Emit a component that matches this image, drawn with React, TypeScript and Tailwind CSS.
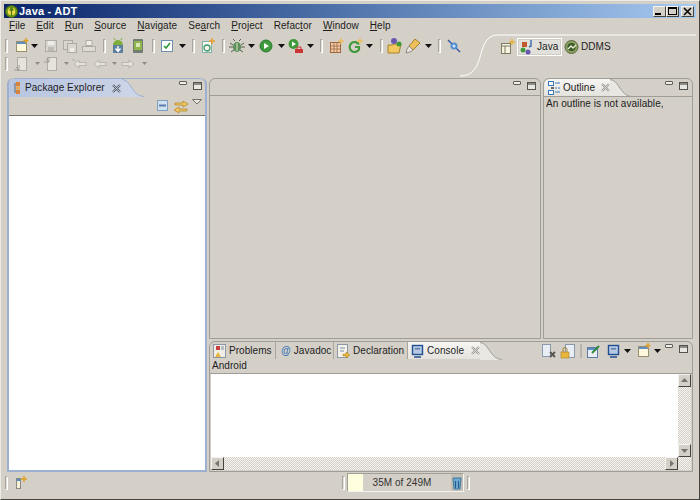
import type { ReactNode } from "react";

function SepBar() {
  return <div className="h-[14px] w-[3px] shrink-0 rounded-[1px] border border-[#a8a59c] border-r-white border-b-white bg-[#e4e1da]" />;
}

function Sep() {
  return (
    <div className="mx-[4px] shrink-0">
      <SepBar />
    </div>
  );
}

function Gap({ w }: { w: number }) {
  return <div className="shrink-0" style={{ width: w }} />;
}

function Arrow({ faded }: { faded?: boolean }) {
  return (
    <svg width="7" height="4" viewBox="0 0 7 4" className="mx-[2px] shrink-0">
      {faded ? <path d="M1 0h5L3.500 3z" fill="#8f8c85" /> : <path d="M0 0h7L3.500 4z" fill="#111" />}
    </svg>
  );
}

function Ico({ children, w = 16 }: { children: ReactNode; w?: number }) {
  return (
    <svg width={w} height="16" viewBox={`0 0 ${w} 16`} className="shrink-0">
      {children}
    </svg>
  );
}

const NewIco = () => (
  <Ico>
    <rect x="3.500" y="3.500" width="10" height="10" fill="#fff8dc" stroke="#9a8f6d" />
    <rect x="4" y="4" width="9" height="2" fill="#5f8fc4" />
    <path d="M13 0v5M10.500 2.500h5" stroke="#e0a020" strokeWidth="1.400" />
  </Ico>
);
const SaveIco = () => (
  <Ico>
    <rect x="2.500" y="2.500" width="11" height="11" fill="#d9d6cf" stroke="#aeaba3" />
    <rect x="5" y="3" width="6" height="4" fill="#efede8" />
    <rect x="5" y="9" width="6" height="4" fill="#bdbab2" />
  </Ico>
);
const SaveAllIco = () => (
  <Ico>
    <rect x="1.500" y="2.500" width="9" height="9" fill="#d9d6cf" stroke="#aeaba3" />
    <rect x="5.500" y="5.500" width="9" height="9" fill="#d9d6cf" stroke="#aeaba3" />
    <rect x="8" y="10" width="4" height="4" fill="#efede8" />
  </Ico>
);
const PrintIco = () => (
  <Ico>
    <path d="M5 2.500h6v5H5z" fill="#efede8" stroke="#aeaba3" />
    <path d="M1.500 8.500h13v5h-13z" fill="#dedbd4" stroke="#aeaba3" />
  </Ico>
);
const SdkIco = () => (
  <Ico>
    <path d="M3 7a5 5 0 0 1 10 0z" fill="#7fae3c" />
    <path d="M5 2 4 0M11 2l1-2" stroke="#7fae3c" />
    <rect x="3" y="7" width="10" height="8" fill="#5d7f9e" />
    <path d="M8 8v5M5.500 10.500 8 13.500l2.500-3" stroke="#fff" strokeWidth="1.400" fill="none" />
  </Ico>
);
const AvdIco = () => (
  <Ico>
    <rect x="3" y="1" width="10" height="14" rx="1" fill="#6f7d72" />
    <rect x="4" y="3" width="8" height="9" fill="#8fb44a" />
    <rect x="6" y="5" width="4" height="4" fill="#d9e8b8" />
  </Ico>
);
const CheckIco = () => (
  <Ico>
    <rect x="2.500" y="2.500" width="11" height="11" fill="#fff" stroke="#6e8fb0" />
    <path d="m5 8 2 2 4-5" stroke="#2f9a3a" strokeWidth="1.600" fill="none" />
  </Ico>
);
const ClassIco = () => (
  <Ico>
    <rect x="2.500" y="3.500" width="9" height="11" fill="#f7f6ef" stroke="#7fb2a8" />
    <circle cx="7" cy="10" r="3" fill="none" stroke="#3f9a6a" strokeWidth="1.300" />
    <path d="M12 0v6M9 3h6" stroke="#e8a030" strokeWidth="1.400" />
  </Ico>
);
const BugIco = () => (
  <Ico>
    <ellipse cx="8" cy="9" rx="4" ry="5" fill="#5c8f5a" />
    <path d="M1 5l3 2M15 5l-3 2M0 9h4M16 9h-4M2 14l3-2M14 14l-3-2M6 3 4 1M10 3l2-2" stroke="#55624f" />
    <path d="M8 5v8" stroke="#dfe8c8" />
  </Ico>
);
const RunIco = () => (
  <Ico>
    <circle cx="8" cy="8" r="6" fill="#3f9a3c" stroke="#2c7a30" />
    <path d="M6 5v6l5-3z" fill="#fff" />
  </Ico>
);
const ExtIco = () => (
  <Ico>
    <circle cx="5.500" cy="6" r="5" fill="#3f9a3c" />
    <path d="M4 3.500v5l4-2.500z" fill="#fff" />
    <path d="M7 11h8v4H7z" fill="#cc3333" />
    <path d="M9 11V9h4v2" stroke="#cc3333" fill="none" />
  </Ico>
);
const GridIco = () => (
  <Ico>
    <rect x="2.500" y="4.500" width="10" height="10" fill="#e9cdb0" stroke="#a5663a" />
    <path d="M6 5v9M9 5v9M3 8h9M3 11h9" stroke="#b5764a" />
    <path d="M13 0v6M10 3h6" stroke="#e8c060" strokeWidth="1.400" />
  </Ico>
);
const SearchG = () => (
  <Ico>
    <path d="M12 6.500a5 5 0 1 0 0 5V9H8" fill="none" stroke="#3f9a3c" strokeWidth="2.200" />
    <path d="M13 0v6M10 3h6" stroke="#e8c060" strokeWidth="1.400" />
  </Ico>
);
const FolderIco = () => (
  <Ico>
    <path d="M1 7h5l1-1h7l-2 9H1z" fill="#f2c860" stroke="#a5822c" />
    <circle cx="7" cy="3" r="3" fill="#6a58b0" />
    <circle cx="12" cy="6" r="2.500" fill="#3f9a3c" />
  </Ico>
);
const PenIco = () => (
  <Ico>
    <path d="m10 1 5 4-7 7-4-4z" fill="#ecbf5c" stroke="#a5822c" />
    <path d="M4 8l4 4-3 2-4 1 1-4z" fill="#e8e4da" stroke="#8f8c85" />
  </Ico>
);
const LinkIco = () => (
  <Ico>
    <path d="M2 2l12 12" stroke="#2a4fa0" strokeWidth="1.300" />
    <circle cx="8" cy="8" r="3.500" fill="#4f8fd0" />
    <circle cx="8" cy="8" r="1.500" fill="#d8e8f8" />
  </Ico>
);
const NavDoc = ({ flip }: { flip?: boolean }) => (
  <Ico>
    <rect x="4.500" y="1.500" width="9" height="13" fill="#e6e3dc" stroke="#aeaba3" />
    <path d={flip ? "M6 1v5H1M3 3l3 3" : "M6 9v5H1M3 11l3 3"} stroke="#9f9c94" fill="none" />
  </Ico>
);
const NavArrow = ({ left, tail }: { left?: boolean; tail?: boolean }) => (
  <Ico>
    <path
      d={left ? "M2 8l5-4v2.500h7v3H7V12z" : "M14 8 9 4v2.500H2v3h7V12z"}
      fill="#e6e3dc"
      stroke="#aeaba3"
      strokeWidth="0.800"
    />
    {tail && <path d="M0 4h3" stroke="#aeaba3" />}
  </Ico>
);

function MinMax() {
  return (
    <div className="mb-[4px] flex items-start gap-[6px]">
      <div className="h-[4px] w-[8px] rounded-[1px] border border-[#5f5d58] bg-[#f0eee9]" />
      <div className="mt-px flex h-[8px] w-[9px] flex-col border border-[#55534e] bg-[#e9e7e1]">
        <div className="h-[2px] bg-[#8d8b85]" />
      </div>
    </div>
  );
}

function TabCurve({ fill, stroke = "#9f9d97" }: { fill: string; stroke?: string }) {
  return (
    <svg width="22" height="18" viewBox="0 0 22 18" className="shrink-0 self-start">
      <path d="M0 0C9 0 10 17 22 17V18H0z" fill={fill} />
      <path d="M0 .5C9 .5 10 17.500 22 17.500" fill="none" stroke={stroke} />
    </svg>
  );
}

function CloseX({ faded }: { faded?: boolean }) {
  const c = faded ? "#9a9994" : "#50596b";
  return (
    <svg width="9" height="9" viewBox="0 0 9 9" className="shrink-0">
      <path d="M1 1l7 7M8 1 1 8" stroke={c} strokeWidth="2.200" />
      <path d="M1 1l7 7M8 1 1 8" stroke="#f2f2f0" strokeWidth="0.700" />
    </svg>
  );
}

const PkgIco = () => (
  <Ico w={10}>
    <path d="M2 3v10" stroke="#666" />
    <rect x="3" y="2" width="4" height="4" fill="#d8813a" />
    <rect x="3" y="6.500" width="4" height="3" fill="#e9a64c" />
    <rect x="3" y="10" width="4" height="4" fill="#d8813a" />
  </Ico>
);
const OutlineIco = () => (
  <Ico w={12}>
    <rect x="0.500" y="1.500" width="5" height="4" fill="#fff" stroke="#3a78b8" />
    <rect x="0.500" y="10.500" width="5" height="4" fill="#fff" stroke="#3a78b8" />
    <path d="M7 3h5M7 8h2M10 8h2M7 12h5" stroke="#3a78b8" />
    <rect x="3" y="7" width="3" height="2" fill="#666" />
  </Ico>
);
const ProblemsIco = () => (
  <Ico w={13}>
    <rect x="0.500" y="1.500" width="12" height="13" fill="#f1eee6" stroke="#8c98a8" />
    <rect x="3" y="3" width="4" height="4" fill="#c94040" />
    <path d="M8 4h3M8 6h3" stroke="#7d8da3" />
    <path d="M2 14l3-5 3 5z" fill="#e9b53a" />
  </Ico>
);
const DeclIco = () => (
  <Ico w={13}>
    <rect x="0.500" y="1.500" width="10" height="13" fill="#f5f2e8" stroke="#8c98a8" />
    <path d="M3 5h5M3 8h4" stroke="#6f8fb8" />
    <path d="M6 11h3V9l4 3-4 3v-2H6z" fill="#e9b53a" stroke="#a5822c" strokeWidth="0.500" />
  </Ico>
);
const ConsoleIco = () => (
  <Ico w={13}>
    <rect x="1.500" y="2.500" width="10" height="9" fill="#b5c9e2" stroke="#214f92" strokeWidth="1.400" />
    <rect x="4" y="5" width="5" height="1.500" fill="#5d7da8" />
    <path d="M3 14h7" stroke="#214f92" strokeWidth="1.500" />
  </Ico>
);

function SideTab({ label, icon, w }: { label: string; icon: ReactNode; w: number }) {
  return (
    <div className="flex h-[17px] shrink-0 items-center gap-[3px] border-r border-[#a9a69e] pl-[3px]" style={{ width: w }}>
      {icon}
      <span>{label}</span>
    </div>
  );
}

function ScrollBtn({ dir }: { dir: "up" | "down" | "left" | "right" }) {
  const p = { up: "M1 6 4.500 2 8 6z", down: "M1 3h7L4.500 7z", left: "M6 1v7L2 4.500z", right: "M3 1v7l4-3.500z" }[dir];
  return (
    <div className="flex h-[13px] w-[13px] shrink-0 items-center justify-center border border-[#f4f3ef] border-r-[#45443f] border-b-[#45443f] bg-[#d4d0c8]">
      <svg width="9" height="9" viewBox="0 0 9 9">
        <path d={p} fill="#77756f" />
      </svg>
    </div>
  );
}

const checker = "bg-[repeating-conic-gradient(#d4d0c8_0_25%,#f5f4f0_0_50%)] bg-[length:2px_2px]";
const winBtn = "flex h-[11px] w-[13px] items-center justify-center border border-[#f4f3ef] border-r-[#45443f] border-b-[#45443f] bg-[#d4d0c8]";

export default function App() {
  return (
    <div className="h-[500px] w-[700px] overflow-hidden whitespace-nowrap border border-[#ecebe6] border-r-[#45443f] border-b-[#45443f] bg-[#d4d0c8] px-[3px] pb-px pt-[3px] font-['Liberation_Sans',sans-serif] text-[10px] leading-none tracking-[0.05px] text-[#1c1c1c]">
      <div className="flex h-full flex-col">
        {/* title bar */}
        <div className="flex h-[14px] shrink-0 items-center bg-gradient-to-r from-[#0a246a] to-[#a6caf0] pl-px pr-[2px]">
          <svg width="13" height="13" viewBox="0 0 14 14" className="shrink-0">
            <circle cx="7" cy="7" r="6.500" fill="#6f9a1c" stroke="#3e5e10" />
            <circle cx="7" cy="7" r="4" fill="#f6e04a" />
            <path d="M7 2v10M5 6l2-3 2 3" stroke="#4d7a12" fill="none" strokeWidth="1.400" />
          </svg>
          <span className="ml-px text-[11px] font-bold tracking-[0.2px] text-white">Java - ADT</span>
          <div className="ml-auto flex">
            <div className={winBtn}>
              <div className="mr-[3px] mt-[5px] h-[2px] w-[6px] bg-black" />
            </div>
            <div className={winBtn}>
              <div className="h-[8px] w-[9px] border border-t-2 border-black" />
            </div>
            <div className={`${winBtn} ml-[2px]`}>
              <svg width="9" height="9" viewBox="0 0 9 9">
                <path d="M1 1l7 7M8 1 1 8" stroke="#000" strokeWidth="1.500" />
              </svg>
            </div>
          </div>
        </div>

        {/* menu */}
        <div className="flex h-[16px] shrink-0 items-center gap-[11px] pl-[5px]">
          <span><u>F</u>ile</span>
          <span><u>E</u>dit</span>
          <span><u>R</u>un</span>
          <span><u>S</u>ource</span>
          <span><u>N</u>avigate</span>
          <span>Se<u>a</u>rch</span>
          <span><u>P</u>roject</span>
          <span>Refac<u>t</u>or</span>
          <span><u>W</u>indow</span>
          <span><u>H</u>elp</span>
        </div>

        {/* toolbar area */}
        <div className="relative flex h-[44px] shrink-0 flex-col pt-[2px]">
          <div className="ml-[-3px] flex h-[20px] items-center">
            <Sep /><Gap w={1} /><NewIco /><Arrow /><Gap w={3} /><SaveIco /><Gap w={3} /><SaveAllIco /><Gap w={3} /><PrintIco />
            <Gap w={2} /><Sep /><SdkIco /><Gap w={4} /><AvdIco /><Gap w={2} /><Sep /><CheckIco /><Gap w={2} /><Arrow /><Sep />
            <Gap w={1} /><ClassIco /><Gap w={2} /><Sep /><BugIco /><Gap w={1} /><Arrow /><Gap w={1} /><RunIco /><Gap w={2} /><Arrow />
            <Gap w={1} /><ExtIco /><Gap w={1} /><Arrow /><Sep /><Gap w={1} /><GridIco /><Gap w={3} /><SearchG /><Gap w={1} /><Arrow />
            <Gap w={1} /><Sep /><FolderIco /><Gap w={2} /><PenIco /><Gap w={2} /><Arrow /><Sep /><Gap w={1} /><LinkIco />
          </div>
          <div className="ml-[-3px] flex h-[16px] items-center">
            <Sep /><Gap w={1} /><NavDoc /><Gap w={3} /><Arrow faded /><NavDoc flip /><Gap w={2} /><Arrow faded /><NavArrow left tail />
            <Gap w={4} /><NavArrow left /><Gap w={1} /><Arrow faded /><NavArrow /><Gap w={3} /><Arrow faded />
          </div>

          {/* perspective switcher */}
          <svg width="236" height="44" viewBox="0 0 236 44" className="absolute right-0 top-0">
            <path d="M0 42C28 42 14 1 38 1H236" fill="none" stroke="#fff" />
          </svg>
          <div className="absolute left-[496px] top-[4px] flex items-center">
            <Ico>
              <rect x="1.500" y="4.500" width="9" height="10" fill="#f7f3de" stroke="#7d7a66" />
              <path d="M2 7h8M5 7v7" stroke="#7d7a66" />
              <path d="M12 0v6M9 3h6" stroke="#e8b030" strokeWidth="1.300" />
            </Ico>
            <div className="ml-px flex h-[18px] w-[45px] items-center gap-[2px] border border-white bg-[#e2e0da] pl-px shadow-[inset_0_0_0_1px_#d0cdc5]">
              <Ico>
                <circle cx="4" cy="11" r="2.500" fill="#3f9a3c" />
                <circle cx="9" cy="13" r="2.500" fill="#6a58b0" />
                <rect x="3" y="3" width="5" height="5" fill="#c05a2a" />
                <path d="M12 1v6l-2 1" stroke="#3a6ab0" fill="none" strokeWidth="1.400" />
              </Ico>
              <span>Java</span>
            </div>
            <div className="ml-[2px] flex items-center gap-px">
              <Ico>
                <circle cx="7.500" cy="8" r="6.500" fill="#8a9e62" stroke="#5c6a40" />
                <circle cx="7.500" cy="8" r="4" fill="#3a5a28" />
                <path d="M4 10l3-3 2 2 3-3" stroke="#e9f0d0" fill="none" strokeWidth="1.300" />
              </Ico>
              <span>DDMS</span>
            </div>
          </div>
        </div>

        {/* workbench */}
        <div className="flex min-h-0 flex-1 gap-[2px] pl-[3px] pr-[3px]">
          {/* left */}
          <div className="flex w-[200px] shrink-0 flex-col rounded-t-[6px] border-2 border-t-0 border-[#9eb0d0]">
            <div className="flex h-[18px] shrink-0 items-center rounded-t-[6px] border-t border-[#9eb0d0] pr-[3px]">
              <div className="flex h-[18px] w-[113px] shrink-0 items-center self-start rounded-tl-[6px] bg-gradient-to-r from-[#b7c5e1] to-[#c9d2e6] pl-[4px]">
                <PkgIco />
                <span className="ml-[2px] w-[80px] shrink-0">Package Explorer</span>
                <Gap w={7} />
                <CloseX />
              </div>
              <TabCurve fill="#ccd4e7" stroke="#9eb0d0" />
              <div className="ml-auto"><MinMax /></div>
            </div>
            <div className="flex h-[20px] shrink-0 items-center justify-end gap-[3px] border-b border-[#77756f] pr-[3px]">
              <Ico>
                <rect x="3.500" y="2.500" width="10" height="10" fill="#cfe0f0" stroke="#7fa0c0" />
                <path d="M5 7.500h7" stroke="#5d7da8" strokeWidth="2" />
              </Ico>
              <Ico>
                <path d="M2 5h8V3l5 3-5 3V7H2z" fill="#f0c860" stroke="#b58a2c" strokeWidth="0.800" />
                <path d="M14 11H6V9l-5 3 5 3v-2h8z" fill="#f0c860" stroke="#b58a2c" strokeWidth="0.800" />
              </Ico>
              <svg width="10" height="16" viewBox="0 0 10 16" className="mb-[4px]">
                <path d="M.5 3.500h9L5 8z" fill="#e8e6e0" stroke="#55534e" strokeWidth="0.800" />
              </svg>
            </div>
            <div className="flex-1 bg-white" />
          </div>

          {/* right column */}
          <div className="flex min-w-0 flex-1 flex-col gap-[2px]">
            <div className="flex h-[261px] shrink-0 gap-[2px]">
              {/* editor area */}
              <div className="flex flex-1 flex-col rounded-t-[6px] border border-[#9f9d97]">
                <div className="flex h-[17px] shrink-0 items-center justify-end border-b border-[#9f9d97] pr-[4px]">
                  <MinMax />
                </div>
              </div>
              {/* outline */}
              <div className="flex w-[150px] shrink-0 flex-col rounded-t-[6px] border border-[#9f9d97]">
                <div className="flex h-[17px] shrink-0 items-center pr-[4px]">
                  <div className="flex h-[17px] items-center rounded-tl-[6px] bg-gradient-to-b from-[#f7f6f3] to-[#e4e2dc] pl-[4px]">
                    <OutlineIco />
                    <span className="ml-[3px]">Outline</span>
                    <Gap w={6} />
                    <CloseX faded />
                  </div>
                  <TabCurve fill="#e9e7e2" />
                  <div className="ml-auto"><MinMax /></div>
                </div>
                <div className="h-px shrink-0 bg-[#9f9d97]" />
                <div className="pl-[2px] pt-[2px]">An outline is not available,</div>
              </div>
            </div>

            {/* bottom */}
            <div className="flex min-h-0 flex-1 flex-col rounded-t-[6px] border border-[#9f9d97]">
              <div className="flex h-[17px] shrink-0 items-center">
                <SideTab label="Problems" icon={<ProblemsIco />} w={66} />
                <SideTab label="Javadoc" w={58} icon={<span className="ml-[2px] text-[10px] font-bold text-[#3a78b8]">@</span>} />
                <SideTab label="Declaration" w={74} icon={<DeclIco />} />
                <div className="flex h-[17px] items-center gap-[3px] bg-gradient-to-b from-[#f7f6f3] to-[#e4e2dc] pl-[3px]">
                  <ConsoleIco />
                  <span>Console</span>
                  <Gap w={1} />
                  <CloseX faded />
                </div>
                <TabCurve fill="#e9e7e2" />
                <div className="ml-auto flex items-center pr-[4px]">
                  <Ico>
                    <rect x="1.500" y="1.500" width="8" height="12" fill="#e9eef5" stroke="#8899b0" />
                    <path d="M9 9l5 5M14 9l-5 5" stroke="#55534e" strokeWidth="1.800" />
                  </Ico>
                  <Gap w={3} />
                  <Ico>
                    <rect x="5.500" y="1.500" width="9" height="13" fill="#e9eef5" stroke="#8899b0" />
                    <rect x="1" y="9" width="8" height="6" fill="#e9b53a" stroke="#a5822c" strokeWidth="0.600" />
                    <path d="M3 9V6.500a2 2 0 0 1 4 0V9" fill="none" stroke="#a5822c" />
                  </Ico>
                  <div className="mx-[4px] h-[14px] w-[2px] bg-[#b8b5ad]" />
                  <Ico>
                    <rect x="1.500" y="4.500" width="10" height="10" fill="#e9eef5" stroke="#5d7da8" />
                    <rect x="2" y="5" width="9" height="2" fill="#5d8fc4" />
                    <path d="M6 10l7-7" stroke="#2f8a3a" strokeWidth="2" />
                  </Ico>
                  <Gap w={5} />
                  <ConsoleIco />
                  <Gap w={2} />
                  <Arrow />
                  <Gap w={2} />
                  <NewIco />
                  <Gap w={1} />
                  <Arrow />
                  <Gap w={2} />
                  <MinMax />
                </div>
              </div>
              <div className="flex h-[14px] shrink-0 items-start pl-[2px] pt-[2px]">Android</div>
              <div className="h-px shrink-0 bg-[#9f9d97]" />
              <div className="flex min-h-0 flex-1 flex-col pb-px pl-px pr-px">
                <div className="flex min-h-0 flex-1">
                  <div className="flex-1 bg-white" />
                  <div className={`flex w-[13px] flex-col justify-between ${checker}`}>
                    <ScrollBtn dir="up" />
                    <ScrollBtn dir="down" />
                  </div>
                </div>
                <div className={`flex h-[13px] shrink-0 justify-between pr-[13px] ${checker}`}>
                  <ScrollBtn dir="left" />
                  <ScrollBtn dir="right" />
                </div>
              </div>
            </div>
          </div>
        </div>

        {/* status bar */}
        <div className="ml-[-3px] flex h-[26px] shrink-0 items-center pb-[5px]">
          <Sep />
          <Gap w={3} />
          <Ico w={14}>
            <rect x="1.500" y="3.500" width="4" height="10" fill="#f5f1d8" stroke="#8c8a80" />
            <rect x="2" y="4" width="3" height="2" fill="#4f8fd0" />
            <path d="M9 1v6M6 4h6" stroke="#e0a020" strokeWidth="1.400" />
          </Ico>
          <Gap w={313} />
          <SepBar />
          <Gap w={2} />
          <div className="flex h-[19px] w-[117px] shrink-0 items-center border border-[#f4f3ef] border-t-[#9f9d97] border-l-[#9f9d97]">
            <div className="h-full w-[15px] bg-[#ffffe0]" />
            <div className="flex-1 pr-[10px] text-center text-[#333]">35M of 249M</div>
            <div className="flex h-full w-[12px] items-center justify-center bg-[#c2bfb7]">
              <svg width="10" height="14" viewBox="0 0 10 14">
                <path d="M1 2h8v1l-1 10H2L1 3z" fill="#6fa8cc" stroke="#2a6a98" strokeWidth="0.800" />
                <path d="M3.500 5v7M6.500 5v7" stroke="#1f5a88" />
              </svg>
            </div>
          </div>
          <Gap w={3} />
          <SepBar />
        </div>
      </div>
    </div>
  );
}
